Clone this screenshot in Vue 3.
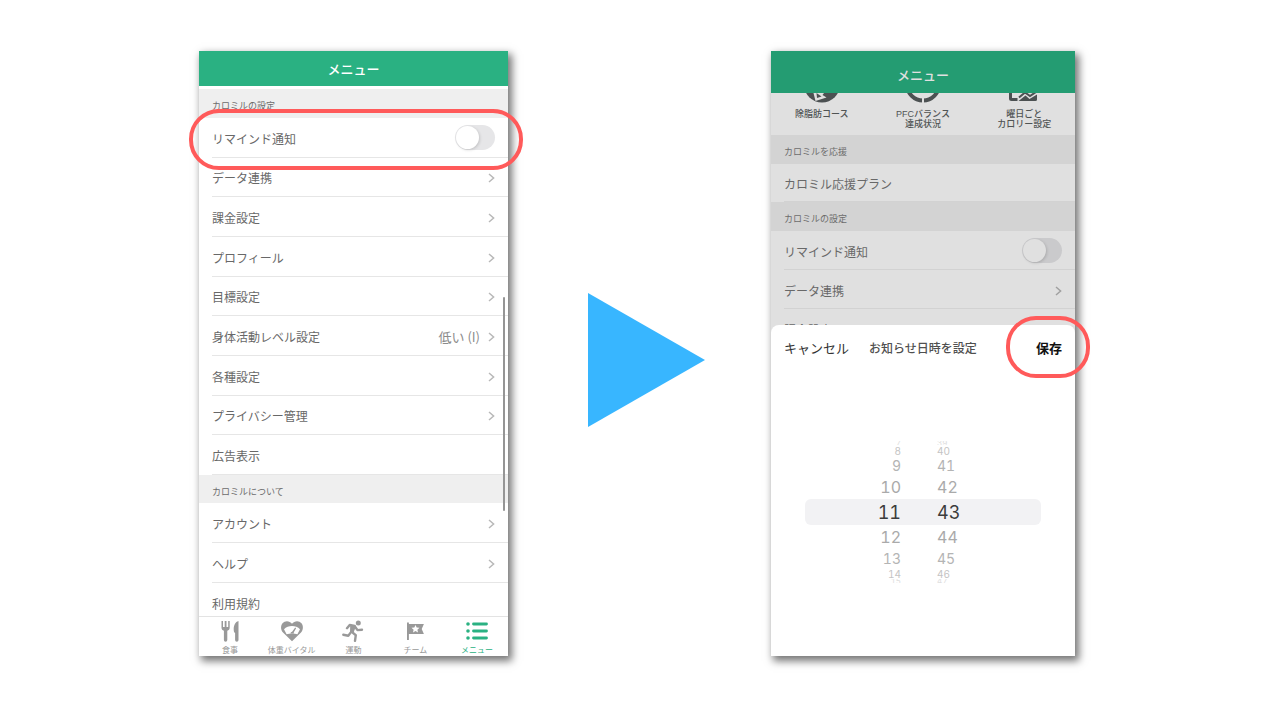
<script setup>
const settings = [
  { label: 'リマインド通知', toggle: true },
  { label: 'データ連携', arrow: true },
  { label: '課金設定', arrow: true },
  { label: 'プロフィール', arrow: true },
  { label: '目標設定', arrow: true },
  { label: '身体活動レベル設定', value: '低い (I)', arrow: true },
  { label: '各種設定', arrow: true },
  { label: 'プライバシー管理', arrow: true },
  { label: '広告表示' },
]
const about = [
  { label: 'アカウント', arrow: true },
  { label: 'ヘルプ', arrow: true },
  { label: '利用規約' },
]
const behind = [{ label: 'データ連携' }, { label: '課金設定' }]
const hours = [7, 8, 9, 10, 11, 12, 13, 14, 15]
const minutes = [39, 40, 41, 42, 43, 44, 45, 46, 47]
const depth = (i) => 'd' + Math.abs(i - 4)
</script>

<template>
  <main class="stage">
    <section class="phone left">
      <header class="bar"><h1>メニュー</h1></header>
      <h2 class="group first">カロミルの設定</h2>
      <ul class="rows settings">
        <li v-for="s in settings" :key="s.label">
          <template v-if="s.toggle">
            <label class="row" for="remind-a">{{ s.label }}</label>
            <input id="remind-a" class="switch" type="checkbox" />
            <span class="ring wide"></span>
          </template>
          <button v-else class="row" type="button">
            <span class="name">{{ s.label }}</span>
            <span v-if="s.value" class="value">{{ s.value }}</span>
            <svg v-if="s.arrow" class="chevron" viewBox="0 0 7 10"><path d="M1 1l4.600 4L1 9" /></svg>
          </button>
        </li>
      </ul>
      <h2 class="group second">カロミルについて</h2>
      <ul class="rows about">
        <li v-for="s in about" :key="s.label">
          <button class="row" type="button">
            <span class="name">{{ s.label }}</span>
            <svg v-if="s.arrow" class="chevron" viewBox="0 0 7 10"><path d="M1 1l4.600 4L1 9" /></svg>
          </button>
        </li>
      </ul>
      <nav class="tabs">
        <a href="#meal">
          <svg viewBox="0 0 24 22">
            <path d="M3.500 1v6.500c0 1.800.9 2.800 2.400 3.300V20a1.700 1.700 0 0 0 3.400 0v-9.200c1.500-.5 2.400-1.500 2.400-3.300V1h-1.500v6H8.500V1H6.700v6H5V1z" />
            <path d="M20.500 1c-3.200.8-4.800 4.500-4.800 8.200 0 1.800.3 3.300 1.400 3.900V20a1.700 1.700 0 0 0 3.400 0z" />
          </svg>食事
        </a>
        <a href="#vital">
          <svg viewBox="0 0 24 22">
            <path d="M12 21.300 3 12.400C.5 9.800.6 5.500 2.500 3.200c2.500-3 7.200-2.700 9.500.6 2.300-3.300 7-3.600 9.500-.6 1.900 2.300 2 6.600-.5 9.200z" />
            <path class="cut" d="M4 9.300c4-4.400 12-4.400 16 0l-2.600 4.900c-3-.9-7.800-.9-10.800 0z" />
            <path d="M10.400 13.500c.2-1 .9-1.600 1.700-1.700l3.100-4.200.9.700-2.400 4.200c.2.300.3.600.3 1z" />
          </svg>体重バイタル
        </a>
        <a href="#exercise">
          <svg viewBox="0 0 24 22">
            <circle cx="17.300" cy="2.900" r="2.500" />
            <path class="limb" d="M6 8.200 8.700 5l5 .9-2.900 6 4 3.300-.8 5.600M13.900 6.500l2.600 3.600 4.500-.3M9.800 12.400l-2.500 3.300-5-1" />
            <path d="M9.200 5.500l5.600.6-2.100 6.300-3.700.5z" />
          </svg>運動
        </a>
        <a href="#team">
          <svg viewBox="0 0 24 22">
            <path d="M4 2.500h1.900V4h15l-2.200 5 2.200 5h-15v6H4z" />
            <path class="cut" d="M12.500 4.900l1.200 2.600 2.800.3-2.100 1.900.6 2.800-2.500-1.400L10 12.500l.6-2.800-2.100-1.900 2.800-.3z" />
          </svg>チーム
        </a>
        <a href="#menu" class="active">
          <svg viewBox="0 0 24 22">
            <circle cx="3" cy="4" r="1.800" /><circle cx="3" cy="11" r="1.800" /><circle cx="3" cy="18" r="1.800" />
            <path class="bars" d="M8.500 4h13M8.500 11h13M8.500 18h13" />
          </svg>メニュー
        </a>
      </nav>
      <span class="scrollbar"></span>
    </section>

    <svg class="arrow" viewBox="0 0 117 134" aria-hidden="true"><path d="M0 0 117 67 0 134z" /></svg>

    <section class="phone right">
      <header class="bar"><h1>メニュー</h1></header>
      <div class="courses">
        <a href="#course">
          <svg viewBox="0 26 36 10">
            <circle cx="18" cy="17.500" r="18" />
            <path class="light" d="M9.500 26h10.500l-1.500 2 4 2.500-11 3.500z" />
            <path d="M12.500 26l5 3.500-4.500 1.500z" />
          </svg>
          <span>除脂肪コース</span>
        </a>
        <a href="#pfc">
          <svg viewBox="0 26 36 10">
            <circle class="donut" cx="18" cy="17.500" r="16" />
            <path class="split" d="M18 30v6" />
          </svg>
          <span>PFCバランス<br />達成状況</span>
        </a>
        <a href="#weekday">
          <svg viewBox="0 26 36 10">
            <path class="axis" d="M4.500 25v6.500q0 1 1 1h6" />
            <path class="trend" d="M13 30.500l6-5 5 3.500 6-4" />
            <path d="M12.500 34l7-5.500 4 3.500 7.500-4.500v5q0 1.500-1.500 1.500z" />
          </svg>
          <span>曜日ごと<br />カロリー設定</span>
        </a>
      </div>
      <h2 class="group">カロミルを応援</h2>
      <ul class="rows plan">
        <li><button class="row" type="button"><span class="name">カロミル応援プラン</span></button></li>
      </ul>
      <h2 class="group">カロミルの設定</h2>
      <ul class="rows behind">
        <li>
          <label class="row" for="remind-b">リマインド通知</label>
          <input id="remind-b" class="switch" type="checkbox" />
        </li>
        <li v-for="s in behind" :key="s.label">
          <button class="row" type="button">
            <span class="name">{{ s.label }}</span>
            <svg class="chevron" viewBox="0 0 7 10"><path d="M1 1l4.600 4L1 9" /></svg>
          </button>
        </li>
      </ul>
      <div class="sheet" role="dialog" aria-labelledby="sheet-title">
        <div class="actions">
          <button class="cancel" type="button">キャンセル</button>
          <h2 id="sheet-title">お知らせ日時を設定</h2>
          <button class="save" type="button">保存</button>
          <span class="ring small"></span>
        </div>
        <div class="wheel">
          <ul class="hours" role="listbox" aria-label="時">
            <li v-for="(h, i) in hours" :key="h" role="option" :aria-selected="i === 4" :class="depth(i)">{{ h }}</li>
          </ul>
          <ul class="minutes" role="listbox" aria-label="分">
            <li v-for="(m, i) in minutes" :key="m" role="option" :aria-selected="i === 4" :class="depth(i)">{{ m }}</li>
          </ul>
        </div>
      </div>
    </section>
  </main>
</template>

<style>
body {
  background: #fff;
}
</style>

<style scoped>
.stage {
  display: grid;
  grid-template-columns: 199fr 309fr 80fr 117fr 66fr 304fr 205fr;
  align-items: start;
  padding: 51px 0 64px;
  font-family: "Noto Sans CJK JP", "Liberation Sans", sans-serif;
  color: #686868;
}
h1,
h2,
ul {
  margin: 0;
  padding: 0;
  list-style: none;
  font-weight: 400;
}
button {
  padding: 0;
  border: 0;
  background: none;
  font: inherit;
  color: inherit;
  text-align: left;
}
a {
  color: inherit;
  text-decoration: none;
}
.phone {
  position: relative;
  background: #fff;
  box-shadow: 3px 4px 8px 1px rgba(0, 0, 0, 0.55);
}
.left {
  grid-column: 2;
}
.right {
  grid-column: 6;
  background: #e0e0e0;
}
.bar {
  display: flex;
  align-items: center;
  justify-content: center;
  height: 35px;
  background: #2ab182;
  color: #fff;
}
.bar h1 {
  font-size: 13px;
  line-height: 20px;
  font-weight: 500;
}
.right .bar {
  height: 36px;
  padding-top: 6px;
  background: #249c72;
  color: #e0e0e0;
}
.group {
  height: 29px;
  padding-left: 13px;
  background: #efefef;
  font-size: 9px;
  line-height: 33px;
  color: #6c6c6c;
}
.group.first {
  margin-top: 3px;
}
.group.second {
  height: 28px;
}
.right .group {
  background: #d3d3d3;
}
.rows {
  display: grid;
  padding-left: 13px;
}
.rows li {
  position: relative;
  display: flex;
  align-items: center;
  padding-right: 13px;
  border-bottom: 1px solid #e6e6e6;
}
.row {
  display: flex;
  flex: 1;
  align-items: center;
  align-self: stretch;
  padding-top: 3px;
  font-size: 12px;
  line-height: 18px;
}
.name {
  flex: 1;
}
.settings {
  grid-auto-rows: 1fr;
  min-height: 357px;
}
.about {
  grid-auto-rows: 40px;
  max-height: 113px;
  overflow: hidden;
}
.plan {
  grid-auto-rows: 38px;
}
.behind {
  grid-auto-rows: 39px;
  max-height: 94px;
  overflow: hidden;
}
.right .rows li {
  border-color: #d2d2d2;
}
.value {
  margin-right: 8px;
  font-size: 13px;
  color: #8c8c8c;
}
.chevron {
  width: 7px;
  height: 10px;
  fill: none;
  stroke: #b8b8b8;
  stroke-width: 1.500;
}
.right .chevron {
  stroke: #a0a0a0;
}
.switch {
  appearance: none;
  width: 40px;
  height: 25px;
  margin: 0;
  border-radius: 13px;
  background: #e6e6e8;
}
.switch::before {
  content: "";
  display: block;
  width: 23px;
  height: 23px;
  margin: 1px;
  border-radius: 50%;
  background: #fff;
  box-shadow: 1px 1px 3px rgba(0, 0, 0, 0.15);
}
.right .switch {
  background: #cacacc;
}
.right .switch::before {
  background: #e0e0e0;
}
.ring {
  position: absolute;
  z-index: 2;
  box-sizing: border-box;
  border: 4px solid #ff5a5a;
  border-radius: 30px;
  pointer-events: none;
}
.ring.wide {
  inset: -9px -15px -13px -23px;
}
.ring.small {
  top: -9px;
  right: -15px;
  width: 84px;
  height: 62px;
}
.scrollbar {
  position: absolute;
  top: 246px;
  right: 3px;
  width: 2px;
  height: 214px;
  border-radius: 1px;
  background: #959595;
}
.tabs {
  display: grid;
  grid-template-columns: repeat(5, 1fr);
  box-sizing: border-box;
  height: 40px;
  border-top: 1px solid #e3e3e3;
  background: #fff;
}
.tabs a {
  display: flex;
  flex-direction: column;
  align-items: center;
  padding-top: 3px;
  font-size: 8px;
  line-height: 15px;
  color: #999;
  white-space: nowrap;
}
.tabs svg {
  width: 24px;
  height: 22px;
  fill: #999;
}
.tabs .cut {
  fill: #fff;
}
.tabs .limb {
  fill: none;
  stroke: #999;
  stroke-width: 2.400;
  stroke-linecap: round;
  stroke-linejoin: round;
}
.tabs .active {
  color: #2ab182;
}
.tabs .active svg {
  fill: #2ab182;
}
.bars {
  stroke: #2ab182;
  stroke-width: 2.800;
  stroke-linecap: round;
}
.arrow {
  grid-column: 4;
  width: 100%;
  margin-top: 242px;
  fill: #38b6ff;
}
.courses {
  display: grid;
  grid-template-columns: repeat(3, 1fr);
  min-height: 42px;
}
.courses a {
  display: flex;
  flex-direction: column;
  align-items: center;
  gap: 6px;
  font-family: "Liberation Sans", "Noto Sans CJK JP", sans-serif;
  font-size: 9px;
  line-height: 10px;
  font-weight: 500;
  text-align: center;
  color: #505454;
}
.courses svg {
  width: 36px;
  height: 10px;
  fill: #4c5152;
}
.courses .light {
  fill: #e0e0e0;
}
.courses .donut,
.courses .axis,
.courses .trend {
  fill: none;
  stroke: #4c5152;
  stroke-width: 4;
}
.courses .axis {
  stroke-width: 3;
}
.courses .trend {
  stroke-width: 2;
}
.courses .split {
  stroke: #e0e0e0;
  stroke-width: 2;
}
.sheet {
  padding-bottom: 73px;
  border-radius: 8px 8px 0 0;
  background: #fff;
}
.actions {
  position: relative;
  display: grid;
  grid-template-columns: 1fr auto 1fr;
  align-items: center;
  height: 46px;
  padding: 0 13px;
  font-size: 13px;
  line-height: 20px;
}
.actions h2 {
  font-size: 12px;
  font-weight: 500;
  color: #505050;
}
.cancel {
  color: #333;
}
.save {
  justify-self: end;
  font-weight: 700;
  color: #111;
}
.wheel {
  position: relative;
  display: grid;
  grid-template-columns: 130fr 138fr;
  column-gap: 36px;
  margin-top: 70px;
  font-family: Inter, "Liberation Sans", sans-serif;
  font-variant-numeric: tabular-nums;
  color: #aaa;
}
.wheel::before {
  content: "";
  position: absolute;
  inset: 58px 34px;
  border-radius: 6px;
  background: #f2f2f4;
}
.wheel ul {
  position: relative;
}
.wheel .hours {
  text-align: right;
}
.d0 {
  height: 26px;
  font-size: 18px;
  line-height: 27px;
  color: #3c3c3c;
}
.d1 {
  height: 24px;
  font-size: 16px;
  line-height: 25px;
}
.d2 {
  height: 19px;
  font-size: 14px;
  line-height: 20px;
  color: #b4b4b4;
}
.d3 {
  height: 11px;
  font-size: 10px;
  line-height: 12px;
  color: #c4c4c4;
}
.d4 {
  height: 4px;
  overflow: hidden;
  font-size: 8px;
  line-height: 4px;
  color: #dedede;
}
</style>
